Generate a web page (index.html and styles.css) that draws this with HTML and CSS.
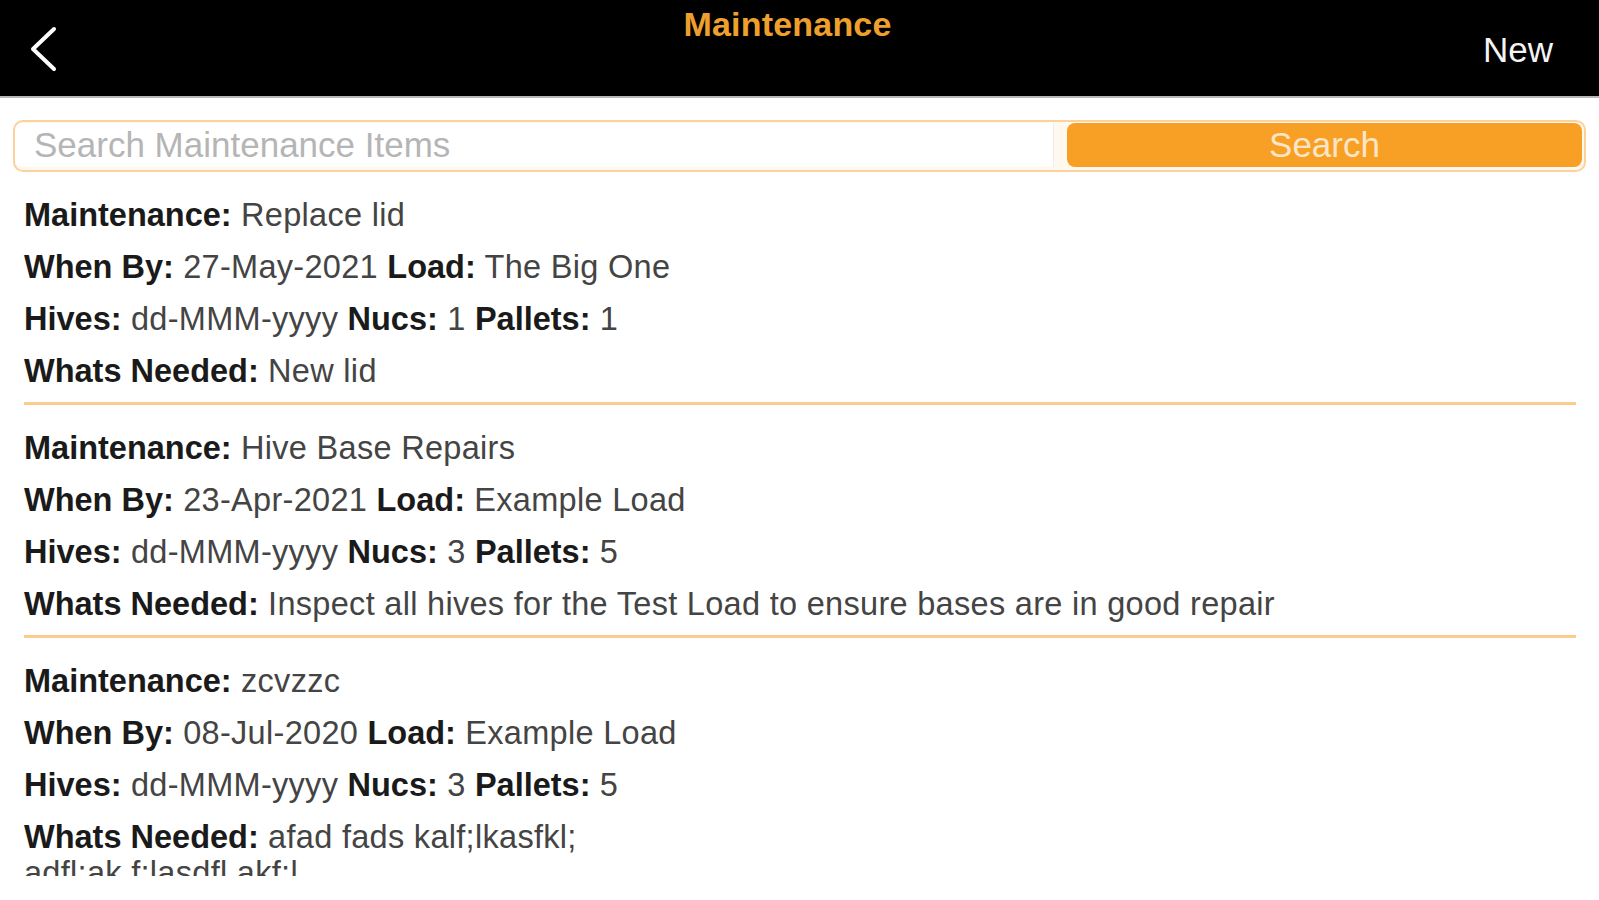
FILE: index.html
```html
<!DOCTYPE html>
<html lang="en">
<head>
<meta charset="utf-8">
<title>Maintenance</title>
<link rel="stylesheet" href="styles.css">
</head>
<body>
<div class="app">
  <header class="navbar">
    <button class="nav-back" aria-label="Back">
      <svg width="30" height="46" viewBox="0 0 30 46"><path d="M25 3 L4 23 L25 43" fill="none" stroke="#fff" stroke-width="4" stroke-linecap="round" stroke-linejoin="round"/></svg>
    </button>
    <h1 class="nav-title">Maintenance</h1>
    <button class="nav-new">New</button>
  </header>

  <form class="search">
    <input class="search-input" type="text" placeholder="Search Maintenance Items">
    <button class="search-btn" type="button">Search</button>
  </form>

  <main class="list">
    <section class="item">
      <p class="row"><b>Maintenance:</b> Replace lid</p>
      <p class="row"><b>When By:</b> 27-May-2021 <b>Load:</b> The Big One</p>
      <p class="row"><b>Hives:</b> dd-MMM-yyyy <b>Nucs:</b> 1 <b>Pallets:</b> 1</p>
      <p class="row"><b>Whats Needed:</b> New lid</p>
    </section>
    <section class="item">
      <p class="row"><b>Maintenance:</b> Hive Base Repairs</p>
      <p class="row"><b>When By:</b> 23-Apr-2021 <b>Load:</b> Example Load</p>
      <p class="row"><b>Hives:</b> dd-MMM-yyyy <b>Nucs:</b> 3 <b>Pallets:</b> 5</p>
      <p class="row"><b>Whats Needed:</b> Inspect all hives for the Test Load to ensure bases are in good repair</p>
    </section>
    <section class="item">
      <p class="row"><b>Maintenance:</b> zcvzzc</p>
      <p class="row"><b>When By:</b> 08-Jul-2020 <b>Load:</b> Example Load</p>
      <p class="row"><b>Hives:</b> dd-MMM-yyyy <b>Nucs:</b> 3 <b>Pallets:</b> 5</p>
      <p class="row"><b>Whats Needed:</b> afad fads kalf;lkasfkl;<br>adfl;ak f;lasdfl akf;l</p>
    </section>
  </main>
</div>
</body>
</html>
```

FILE: styles.css
```css
* { box-sizing: border-box; }

html, body {
  margin: 0;
  padding: 0;
  background: #ffffff;
}

body {
  font-family: "Liberation Sans", Arial, sans-serif;
  color: #444444;
}

.app {
  width: 1599px;
  height: 900px;
  overflow: hidden;
  display: flex;
  flex-direction: column;
}

.navbar {
  height: 98px;
  flex: none;
  background: #000;
  border-bottom: 2px solid #b8b8b8;
  display: grid;
  grid-template-columns: 1fr auto 1fr;
  align-items: center;
}

.nav-back {
  justify-self: start;
  background: none;
  border: 0;
  padding: 0;
  margin-left: 29px;
  margin-top: 2px;
  display: flex;
  cursor: pointer;
}

.nav-title {
  align-self: start;
  margin: 4px 24px 0 0;
  font-size: 34px;
  line-height: 40px;
  font-weight: 700;
  color: #eea02e;
  letter-spacing: 0.2px;
}

.nav-new {
  justify-self: end;
  background: none;
  border: 0;
  padding: 0;
  margin-right: 46px;
  margin-top: 4px;
  font-family: inherit;
  font-size: 35px;
  color: #f4f4f4;
  cursor: pointer;
}

.search {
  flex: none;
  margin: 22px 13px 0;
  height: 52px;
  border: 2px solid #fcd29c;
  border-radius: 10px;
  background: #fff8ee;
  display: flex;
  align-items: stretch;
  gap: 13px;
  padding: 1px 2px 3px 0;
}

.search-input {
  flex: 1;
  min-width: 0;
  border: 0;
  border-right: 1px solid #eeeeee;
  border-radius: 8px 0 0 8px;
  background: #ffffff;
  padding: 0 0 0 19px;
  font-family: inherit;
  font-size: 35px;
  color: #333;
  outline: none;
}

.search-input::placeholder {
  color: #b5b5b5;
}

.search-btn {
  flex: none;
  width: 515px;
  border: 0;
  border-radius: 8px;
  background: #f8a025;
  color: #fde6c8;
  font-family: inherit;
  font-size: 35px;
  padding: 0;
  cursor: pointer;
}

.list {
  flex: none;
  height: 704px;
  overflow: hidden;
  padding: 17px 23px 0 24px;
}

.item {
  padding-bottom: 5px;
  border-bottom: 3px solid #fdcb8e;
  margin-bottom: 17px;
}

.row {
  margin: 0;
  padding: 8px 0;
  font-size: 32.5px;
  line-height: 36px;
  letter-spacing: 0.3px;
  color: #444444;
}

.row b {
  font-weight: 700;
  color: #1a1a1a;
  letter-spacing: 0;
}
```
